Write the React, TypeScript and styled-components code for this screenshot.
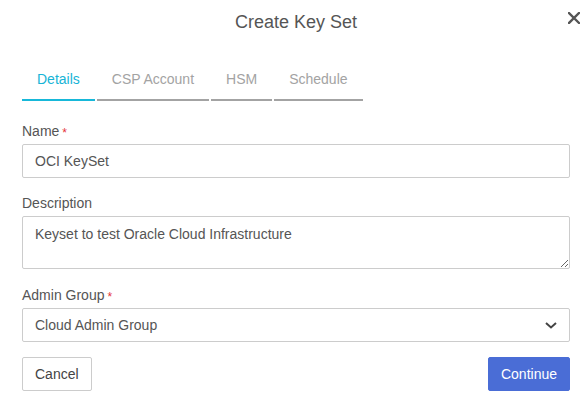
import { createGlobalStyle } from "styled-components";
import styled from "styled-components";

const fontStack = `Arial, "Liberation Sans", "Helvetica Neue", sans-serif`;

const GlobalStyle = createGlobalStyle`
  html, body {
    margin: 0;
    padding: 0;
    background: #fff;
  }
  body {
    font-family: ${fontStack};
    color: #555;
  }
`;

const Modal = styled.div`
  width: 585px;
  height: 406px;
  box-sizing: border-box;
  padding: 0 15px 0 22px;
  display: flex;
  flex-direction: column;
  background: #fff;
`;

const Header = styled.div`
  position: relative;
  height: 44px;
  display: flex;
  align-items: center;
  justify-content: center;
`;

const Title = styled.h1`
  margin: 0;
  font-family: ${fontStack};
  font-size: 18px;
  font-weight: normal;
  line-height: 22px;
  color: #555;
`;

const CloseButton = styled.button`
  position: absolute;
  right: -13px;
  top: 9px;
  width: 18px;
  height: 18px;
  padding: 0;
  border: 0;
  background: transparent;
  display: flex;
  align-items: center;
  justify-content: center;
  cursor: pointer;
`;

const Tabs = styled.div`
  display: flex;
  gap: 2px;
  margin-top: 25px;
`;

const Tab = styled.div<{ $active?: boolean }>`
  padding: 0 15px 10px;
  font-family: ${fontStack};
  font-size: 14px;
  line-height: 20px;
  color: ${(p) => (p.$active ? "#17b4d6" : "#a3a3a3")};
  border-bottom: 2px solid ${(p) => (p.$active ? "#17b8d9" : "#a3a3a3")};
  white-space: nowrap;
`;

const Form = styled.div`
  display: flex;
  flex-direction: column;
  margin-top: 20px;
`;

const Field = styled.div<{ $gap?: number }>`
  display: flex;
  flex-direction: column;
  gap: 3px;
  margin-bottom: ${(p) => p.$gap ?? 15}px;
`;

const Label = styled.label`
  display: block;
  height: 20px;
  font-family: ${fontStack};
  font-size: 14px;
  line-height: 20px;
  color: #555;
`;

const Required = styled.span`
  color: #e5343a;
  font-size: 12px;
  line-height: 0;
  margin-left: 3px;
  position: relative;
  top: 1px;
`;

const TextInput = styled.input`
  box-sizing: border-box;
  height: 34px;
  width: 100%;
  padding: 0 12px;
  margin: 0;
  border: 1px solid #cccccc;
  border-radius: 2px;
  font-family: ${fontStack};
  font-size: 14px;
  color: #555;
  outline: none;
`;

const TextArea = styled.textarea`
  box-sizing: border-box;
  height: 53px;
  width: 100%;
  padding: 8px 12px;
  margin: 0;
  border: 1px solid #cccccc;
  border-radius: 2px;
  font-family: ${fontStack};
  font-size: 14px;
  line-height: 18px;
  color: #555;
  outline: none;
  display: block;
`;

const SelectBox = styled.div`
  box-sizing: border-box;
  height: 34px;
  padding: 0 12px;
  border: 1px solid #cccccc;
  border-radius: 2px;
  display: flex;
  align-items: center;
  justify-content: space-between;
  font-family: ${fontStack};
  font-size: 14px;
  color: #555;
`;

const Actions = styled.div`
  display: flex;
  justify-content: space-between;
`;

const Button = styled.button<{ $primary?: boolean }>`
  box-sizing: border-box;
  height: 34px;
  padding: 0 12px;
  margin: 0;
  border-radius: 2px;
  font-family: ${fontStack};
  font-size: 14px;
  cursor: pointer;
  border: 1px solid ${(p) => (p.$primary ? "#4a6dd6" : "#cccccc")};
  background: ${(p) => (p.$primary ? "#4a6dd6" : "#fff")};
  color: ${(p) => (p.$primary ? "#fff" : "#444")};
`;

const CloseIcon = () => (
  <svg width="12" height="12" viewBox="0 0 12 12">
    <path d="M1 1 L11 11 M11 1 L1 11" stroke="#555" strokeWidth="2.4" strokeLinecap="square" />
  </svg>
);

const Chevron = () => (
  <svg width="12" height="7" viewBox="0 0 12 7">
    <path d="M1 1 L6 5.5 L11 1" fill="none" stroke="#444" strokeWidth="2" />
  </svg>
);

const tabs = ["Details", "CSP Account", "HSM", "Schedule"];

export default function App() {
  return (
    <>
      <GlobalStyle />
      <Modal>
        <Header>
          <Title>Create Key Set</Title>
          <CloseButton aria-label="Close">
            <CloseIcon />
          </CloseButton>
        </Header>
        <Tabs>
          {tabs.map((t, i) => (
            <Tab key={t} $active={i === 0}>
              {t}
            </Tab>
          ))}
        </Tabs>
        <Form>
          <Field>
            <Label>
              Name<Required>*</Required>
            </Label>
            <TextInput defaultValue="OCI KeySet" />
          </Field>
          <Field $gap={16}>
            <Label>Description</Label>
            <TextArea defaultValue="Keyset to test Oracle Cloud Infrastructure" />
          </Field>
          <Field>
            <Label>
              Admin Group<Required>*</Required>
            </Label>
            <SelectBox>
              <span>Cloud Admin Group</span>
              <Chevron />
            </SelectBox>
          </Field>
          <Actions>
            <Button>Cancel</Button>
            <Button $primary>Continue</Button>
          </Actions>
        </Form>
      </Modal>
    </>
  );
}
